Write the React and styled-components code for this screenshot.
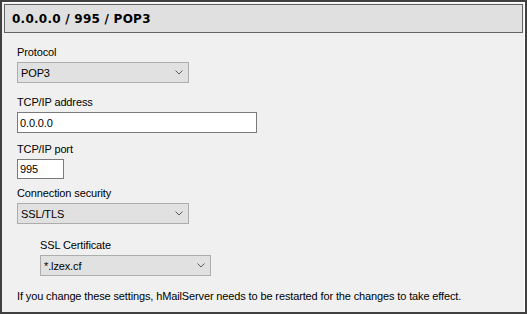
import React from "react"
import styled, { createGlobalStyle } from "styled-components"

const GlobalStyle = createGlobalStyle`
  html, body {
    margin: 0;
    padding: 0;
    background: #f0f0f0;
  }
  body {
    font-family: "Liberation Sans", Arial, sans-serif;
    font-size: 11px;
    letter-spacing: -0.13px;
    color: #000;
  }
`

const Panel = styled.div`
  box-sizing: border-box;
  width: 527px;
  height: 314px;
  border: 2px solid #404040;
  background: #f0f0f0;
  display: flex;
`

const Inner = styled.div`
  flex: 1;
  display: flex;
  flex-direction: column;
  border-top: 1px solid #ffffff;
  border-right: 1px solid #ffffff;
`

const Header = styled.div`
  box-sizing: border-box;
  height: 29px;
  margin: 1px 1px 0 2px;
  border: 1px solid #646464;
  background: #e0e0e0;
  display: flex;
  align-items: center;
  padding-left: 7px;
  font-family: "DejaVu Sans", Verdana, sans-serif;
  font-weight: bold;
  font-size: 12px;
  letter-spacing: 0.25px;
`

const Form = styled.div`
  display: flex;
  flex-direction: column;
  align-items: flex-start;
  padding-left: 15px;
`

const Field = styled.div`
  display: flex;
  flex-direction: column;
  align-items: flex-start;
  margin-top: ${p => p.$top}px;
  margin-left: ${p => p.$indent || 0}px;
`

const Label = styled.div`
  line-height: 13px;
  height: 13px;
  margin-bottom: 3px;
`

const SelectBox = styled.div`
  box-sizing: border-box;
  width: ${p => p.$width}px;
  height: 21px;
  border: 1px solid #adadad;
  background: #e1e1e1;
  display: flex;
  align-items: center;
  justify-content: space-between;
  padding: 0 5px 0 3px;
`

const TextBox = styled.div`
  box-sizing: border-box;
  width: ${p => p.$width}px;
  height: ${p => p.$height || 20}px;
  border: 1px solid #7a7a7a;
  background: #ffffff;
  display: flex;
  align-items: center;
  padding-left: 2px;
`

const Note = styled.div`
  margin-top: 14px;
  line-height: 13px;
`

const Chevron = () => (
  <svg width="8" height="5" viewBox="0 0 8 5">
    <polyline points="0.5,0.5 4,4 7.5,0.5" fill="none" stroke="#5a5a5a" strokeWidth="1" />
  </svg>
)

const Select = ({ width, value }) => (
  <SelectBox $width={width}>
    <span>{value}</span>
    <Chevron />
  </SelectBox>
)

const App = () => (
  <>
    <GlobalStyle />
    <Panel>
      <Inner>
        <Header>0.0.0.0 / 995 / POP3</Header>
        <Form>
          <Field $top={13}>
            <Label>Protocol</Label>
            <Select width={172} value="POP3" />
          </Field>
          <Field $top={13}>
            <Label>TCP/IP address</Label>
            <TextBox $width={240} $height={21}>0.0.0.0</TextBox>
          </Field>
          <Field $top={10}>
            <Label>TCP/IP port</Label>
            <TextBox $width={47}>995</TextBox>
          </Field>
          <Field $top={8}>
            <Label>Connection security</Label>
            <Select width={172} value="SSL/TLS" />
          </Field>
          <Field $top={15} $indent={23}>
            <Label>SSL Certificate</Label>
            <Select width={171} value="*.lzex.cf" />
          </Field>
          <Note>
            If you change these settings, hMailServer needs to be restarted for the changes to take effect.
          </Note>
        </Form>
      </Inner>
    </Panel>
  </>
)

export default App
